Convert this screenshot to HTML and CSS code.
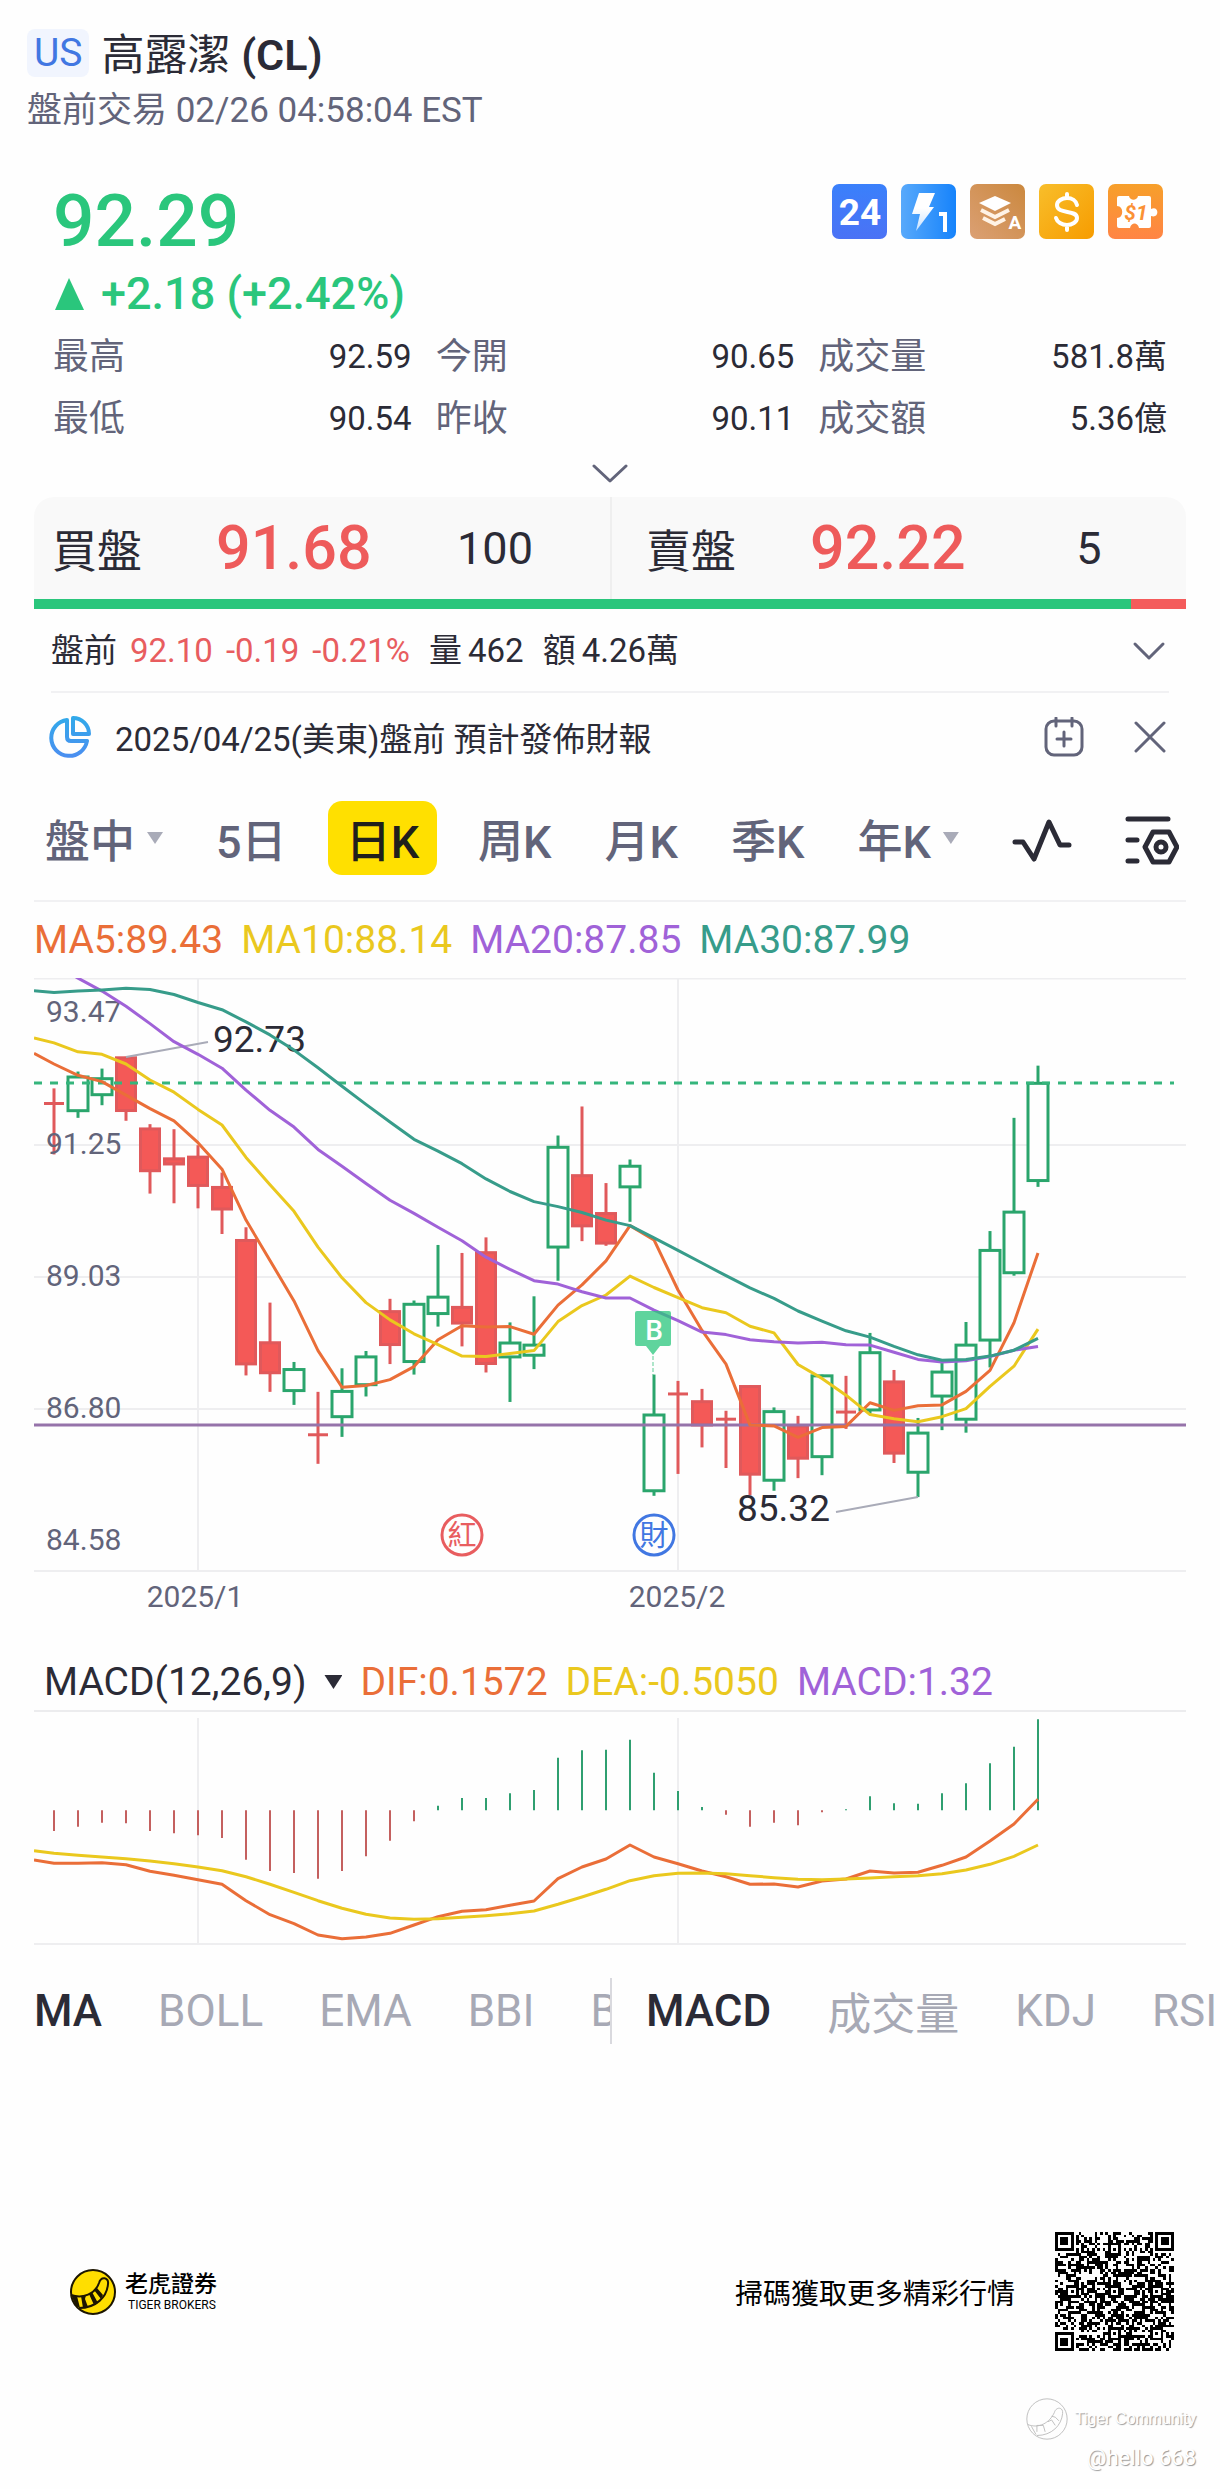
FILE: index.html
```html
<!DOCTYPE html>
<html lang="zh-Hant">
<head>
<meta charset="utf-8">
<meta name="viewport" content="width=device-width, initial-scale=1">
<title>高露潔 (CL)</title>
<link rel="stylesheet" href="styles.css">
</head>
<body>
<header class="head">
  <div class="head-row"><span class="market">US</span><h1 class="name">高露潔 <b>(CL)</b></h1></div>
  <p class="session">盤前交易 02/26 04:58:04 EST</p>
</header>

<main>
<section class="quote">
  <div class="quote-top">
    <div class="last">92.29</div>
    <div class="badges">
      <svg class="badge" viewBox="0 0 55 55"><defs><linearGradient id="b1" x1="0" y1="0" x2="0" y2="1"><stop offset="0" stop-color="#3a80fb"/><stop offset="1" stop-color="#4b72f5"/></linearGradient></defs><rect width="55" height="55" rx="7" fill="url(#b1)"/><text x="28" y="41" class="b-24">24</text></svg>
      <svg class="badge" viewBox="0 0 55 55"><defs><linearGradient id="b2" x1="0" y1="0" x2="1" y2="0"><stop offset="0" stop-color="#58a9fb"/><stop offset="1" stop-color="#1683fb"/></linearGradient><linearGradient id="bolt" x1="0" y1="0" x2="0" y2="1"><stop offset=".4" stop-color="#fff"/><stop offset="1" stop-color="#c4e0ff"/></linearGradient></defs><rect width="55" height="55" rx="7" fill="url(#b2)"/><path d="M18 9h16l-6 14h5L15 47l4-17h-8z" fill="url(#bolt)"/><path d="M38 30h6v18" fill="none" stroke="#fff" stroke-width="4"/></svg>
      <svg class="badge" viewBox="0 0 55 55"><defs><linearGradient id="b3" x1="0" y1="1" x2="1" y2="0"><stop offset="0" stop-color="#dba074"/><stop offset="1" stop-color="#cb883e"/></linearGradient></defs><rect width="55" height="55" rx="7" fill="url(#b3)"/><path d="M25 12l16 7-16 8-16-8z" fill="#fff"/><path d="M11 26l14 7 14-7M13 34l12 6 10-5" fill="none" stroke="#fff3e6" stroke-width="4"/><text x="45" y="45" class="b-a">A</text></svg>
      <svg class="badge" viewBox="0 0 55 55"><defs><linearGradient id="b4" x1="0" y1="0" x2="1" y2="1"><stop offset="0" stop-color="#f8be2b"/><stop offset="1" stop-color="#f79c00"/></linearGradient></defs><rect width="55" height="55" rx="7" fill="url(#b4)"/><path d="M38 21c-1-4-5-7-10-7s-10 3-10 7c0 10 20 4 20 13 0 4-5 7-10 7s-10-3-11-7M28 10v4M28 41v5" fill="none" stroke="#fff" stroke-width="4" stroke-linecap="round"/></svg>
      <svg class="badge" viewBox="0 0 55 55"><defs><linearGradient id="b5" x1="0" y1="0" x2="0" y2="1"><stop offset="0" stop-color="#f7a02a"/><stop offset="1" stop-color="#ff8445"/></linearGradient></defs><rect width="55" height="55" rx="7" fill="url(#b5)"/><path d="M11 12h10c1 5 8 5 9 0h11q2 0 2 2v11c8-4 9 10 0 7v10q0 2-2 2H31c-1-6-8-6-9 0H11q-2 0-2-2v-8c7 0 7-12 0-12v-8q0-2 2-2z" fill="#fff"/><text x="28" y="36" class="b-s1">$1</text></svg>
    </div>
  </div>
  <div class="change"><svg class="up" viewBox="0 0 29 32"><path d="M14 0L29 32H0z" fill="currentColor"/></svg>+2.18 (+2.42%)</div>
  <dl class="stats">
    <div><dt>最高</dt><dd>92.59</dd></div>
    <div><dt>今開</dt><dd>90.65</dd></div>
    <div><dt>成交量</dt><dd>581.8萬</dd></div>
    <div><dt>最低</dt><dd>90.54</dd></div>
    <div><dt>昨收</dt><dd>90.11</dd></div>
    <div><dt>成交額</dt><dd>5.36億</dd></div>
  </dl>
  <button class="more" aria-label="展開"><svg width="36" height="20" viewBox="0 0 36 20"><path d="M2 2l16 15L34 2" class="ico"/></svg></button>
</section>

<section class="book">
  <div class="sides">
    <div class="side"><span class="side-name">買盤</span><span class="side-price">91.68</span><span class="side-qty">100</span></div>
    <div class="side ask"><span class="side-name">賣盤</span><span class="side-price">92.22</span><span class="side-qty">5</span></div>
  </div>
  <div class="ratio"><i style="width:95.2%"></i></div>
</section>

<section class="pre">
  <span>盤前</span><span class="red">92.10</span><span class="red">-0.19</span><span class="red">-0.21%</span><span class="pair">量<b>462</b></span><span class="pair">額<b>4.26萬</b></span>
  <button class="plain end" aria-label="展開盤前"><svg width="34" height="20" viewBox="0 0 34 20"><path d="M3 3l14 14L31 3" class="ico"/></svg></button>
</section>

<section class="notice">
  <svg width="42" height="42" viewBox="0 0 42 42"><defs><linearGradient id="pie" x1="0" y1="0" x2="0" y2="1"><stop offset="0" stop-color="#32a9ea"/><stop offset="1" stop-color="#4a8ff0"/></linearGradient></defs><path d="M18 4A18 18 0 1 0 38 25H22q-4 0-4-4zM24 2a16 16 0 0 1 16 16H24z" fill="none" stroke="url(#pie)" stroke-width="4" stroke-linejoin="round"/></svg>
  <p>2025/04/25(美東)盤前 預計發佈財報</p>
  <button class="plain" aria-label="加入日曆"><svg width="40" height="40" viewBox="0 0 40 40"><rect x="2" y="4" width="36" height="34" rx="8" class="ico"/><path d="M12 1v8M28 1v8M20 15v14M13 22h14" class="ico"/></svg></button>
  <button class="plain" aria-label="關閉"><svg width="32" height="32" viewBox="0 0 32 32"><path d="M2 2l28 28M30 2L2 30" class="ico"/></svg></button>
</section>

<nav class="periods">
  <button>盤中<i class="caret"></i></button>
  <button>5日</button>
  <button class="on">日K</button>
  <button>周K</button>
  <button>月K</button>
  <button>季K</button>
  <button>年K<i class="caret"></i></button>
  <button aria-label="畫線"><svg width="60" height="44" viewBox="0 0 60 44"><path d="M3 24h8l11 17L37 4l11 23h9" class="ink"/></svg></button>
  <button aria-label="設定"><svg width="54" height="50" viewBox="0 0 54 50"><path d="M3 4h40M3 25h9M3 46h9M28 17h16l8 15-8 15H28l-8-15z" class="ink"/><circle cx="36" cy="32" r="5" class="ink"/></svg></button>
</nav>

<section class="chart">
  <p class="legend"><span class="c5">MA5:89.43</span><span class="c10">MA10:88.14</span><span class="c20">MA20:87.85</span><span class="c30">MA30:87.99</span></p>
  <svg id="kline" class="plot" viewBox="0 0 1152 640">
    <path class="grid" d="M0 .5H1152M0 167H1152M0 299H1152M0 431H1152M0 593H1152M164 0V593M644 0V593"/>
    <g id="candles"></g>
    <path class="lastline" d="M0 105H1140"/>
    <g class="axis"><text x="12" y="44">93.47</text><text x="12" y="176">91.25</text><text x="12" y="308">89.03</text><text x="12" y="440">86.80</text><text x="12" y="572">84.58</text></g>
    <text class="peak" x="179" y="74">92.73</text>
    <text class="peak" x="703" y="543">85.32</text>
    <path class="leader" d="M92 79l82-15M802 534l82-15"/>
    <path class="cost" d="M0 447H1152"/>
    <g id="averages"></g>
    <path d="M603 333h32q2 0 2 2v31q0 2-2 2h-9l-7 9-7-9h-9q-2 0-2-2v-31q0-2 2-2z" fill="#2ac67c" fill-opacity=".75"/>
    <path d="M619 378v19" stroke="#5fcd96" stroke-width="1" stroke-dasharray="4 2"/>
    <text class="buy" x="620" y="362">B</text>
    <g class="mark red"><circle cx="428" cy="557" r="20"/><text x="428" y="568">紅</text></g>
    <g class="mark blue"><circle cx="620" cy="557" r="20"/><text x="620" y="568">財</text></g>
    <g class="axis mid"><text x="161" y="629">2025/1</text><text x="643" y="629">2025/2</text></g>
  </svg>
</section>

<section class="macd">
  <p class="legend macd-legend"><button class="plain indicator">MACD(12,26,9)<i class="caret dark"></i></button><span class="c5">DIF:0.1572</span><span class="c10">DEA:-0.5050</span><span class="c20">MACD:1.32</span></p>
  <svg id="macd" class="plot" viewBox="0 0 1152 234">
    <path class="grid" d="M0 232H1152M164 6V232M644 6V232"/>
    <g id="bars"></g>
  </svg>
</section>

<div class="indicators">
  <nav class="strip"><button class="on">MA</button><button>BOLL</button><button>EMA</button><button>BBI</button><button>BIAS</button></nav>
  <nav class="strip sub"><button class="on">MACD</button><button>成交量</button><button>KDJ</button><button>RSI</button></nav>
</div>
</main>

<footer>
  <div class="promo">
    <svg width="48" height="48" viewBox="0 0 48 48"><circle cx="24" cy="24" r="22" fill="#ffde00" stroke="#1c1500" stroke-width="2"/><path d="M2 27c12 4 24-1 28-12 2-7 10-6 9 1-1 13-12 24-29 24" fill="#ffde00" stroke="#1c1500" stroke-width="2"/><path d="M2 27l6 1 3 12-4-2zM12 28l5-1-1 4 3 8-5 1zM20 26l3-2 6 11-4 2zM25 22l3-2 6 7-2 4z" fill="#1c1500"/></svg>
    <div class="brand"><strong>老虎證券</strong><small>TIGER BROKERS</small></div>
    <p class="scan">掃碼獲取更多精彩行情</p>
    <svg id="qr" width="119" height="119" viewBox="0 0 45 45" shape-rendering="crispEdges" role="img" aria-label="QR code"></svg>
  </div>
  <div class="stamp">
    <div class="stamp-row"><svg width="44" height="44" viewBox="0 0 48 48"><g fill="none" stroke="#bbb" stroke-width="1"><circle cx="24" cy="24" r="22"/><path d="M3 30c12 5 24-2 29-13 2-7 10-6 9 1-1 13-12 24-28 24M7 32l5 9M13 38v-7h7l2 7M25 27l4-2 4 6M29 21l4 1 4 4"/></g></svg><span>Tiger Community</span></div>
    <div class="user">@hello 668</div>
  </div>
</footer>
<script src="chart.js"></script>
</body>
</html>
```
FILE: styles.css
```css
* { box-sizing: border-box; margin: 0; padding: 0; }
body { background: #fefefe; color: #2b2b36; font-family: Roboto, "Noto Sans CJK TC", sans-serif; overflow-x: hidden; }
button { font: inherit; color: inherit; background: none; border: 0; display: flex; align-items: center; white-space: nowrap; cursor: pointer; }
svg { display: block; flex: none; }
i, b { font-style: normal; font-weight: inherit; }
.red { color: #e85d5f; }
.blue { color: #4177e2; }

.ico { fill: none; stroke: #62647a; stroke-width: 3; stroke-linecap: round; stroke-linejoin: round; }
.ink { fill: none; stroke: #2b2b36; stroke-width: 5; stroke-linecap: round; stroke-linejoin: round; }

.head { padding: 27px 27px 0; }
.head-row { display: flex; align-items: center; gap: 12px; height: 56px; }
.market { height: 48px; line-height: 48px; padding: 0 7px; margin-bottom: 4px; border-radius: 8px; background: #f1f5fe; color: #4177e2; font-size: 39px; }
.name { font-size: 43px; font-weight: 400; line-height: 56px; }
.name b { font-weight: 600; }
.session { font-size: 35px; line-height: 56px; color: #62647a; }

.quote { padding: 40px 53px 0; }
.quote-top { display: flex; justify-content: space-between; height: 84px; }
.last { font-size: 73px; font-weight: 500; line-height: 84px; color: #2ac67c; }
.badges { display: flex; gap: 14px; padding: 5px 4px 0 0; }
.badge { width: 55px; height: 55px; }
.badge text { fill: #fff; text-anchor: middle; font-weight: 700; }
.badge .b-24 { font-size: 37px; }
.badge .b-a { font-size: 19px; }
.badge .b-s1 { font-size: 21px; font-style: italic; fill: #fb9135; }
.change { display: flex; align-items: center; gap: 17px; padding-left: 2px; font-size: 45px; font-weight: 500; line-height: 62px; color: #2ac67c; }
.up { width: 29px; height: 32px; }
.stats { display: grid; grid-template-columns: 36fr 36fr 35fr; column-gap: 24px; padding-top: 1px; }
.stats div { display: flex; justify-content: space-between; line-height: 62px; }
.stats dt { font-size: 36px; color: #62647a; }
.stats dd { font-size: 33px; }
.more { width: 100%; height: 47px; justify-content: center; }

.book { margin: 0 34px; }
.sides { display: grid; grid-template-columns: 1fr 1fr; height: 102px; background: #f9f9f9; border-radius: 20px 20px 0 0; }
.side { display: flex; align-items: center; padding-left: 18px; }
.side.ask { padding-left: 34px; border-left: 2px solid #efefef; }
.side-name { width: 90px; font-size: 45px; }
.side-price { width: 155px; margin: 0 74px; font-size: 61px; font-weight: 500; color: #ee5b5b; }
.side-qty { width: 100px; text-align: center; font-size: 45px; }
.ratio { height: 10px; background: #f45b5b; }
.ratio i { display: block; height: 10px; background: #2ac67c; }

.pre { display: flex; align-items: center; gap: 13px; height: 84px; padding-top: 2px; margin: 0 51px; border-bottom: 2px solid #f1f1f3; font-size: 33px; line-height: 48px; }
.pair { display: flex; align-items: baseline; gap: 6px; margin-left: 6px; }
.plain.end { margin-left: auto; margin-right: 3px; }
.notice { display: flex; align-items: center; height: 88px; padding: 0 54px 0 49px; gap: 50px; font-size: 33px; }
.notice p { flex: 1; margin-left: -26px; }

.periods { display: flex; justify-content: space-between; height: 121px; padding: 20px 7px 25px 11px; margin: 0 34px; border-bottom: 2px solid #f1f1f3; font-size: 45px; font-weight: 500; color: #62647a; }
.periods svg { margin-top: 4px; }
.periods .on { margin: 0 -12px; padding: 0 18px; border-radius: 14px; background: #ffe000; color: #201f1c; }
.caret { width: 16px; height: 12px; margin-left: 12px; background: #a9abb8; clip-path: polygon(0 0, 100% 0, 50% 100%); }
.caret.dark { width: 18px; height: 14px; margin-left: 18px; background: #2b2b36; }

.chart, .macd { margin: 0 34px; }
.plot { width: 100%; height: auto; }
.legend { display: flex; align-items: center; gap: 18px; height: 76px; font-size: 39px; white-space: nowrap; }
.macd-legend { height: 58px; margin-top: 36px; padding-left: 10px; border-bottom: 2px solid #ececee; }
.c5 { color: #ea6e38; }
.c10 { color: #eac81e; }
.c20 { color: #a062d8; }
.c30 { color: #379c8a; }

.grid { fill: none; stroke: #eeeef0; stroke-width: 2; }
.axis { font-size: 30px; fill: #62647a; }
.mid { text-anchor: middle; }
.peak { font-size: 37px; fill: #2b2b36; }
.leader { fill: none; stroke: #a9abb8; stroke-width: 2; }
.lastline { stroke: #35b57c; stroke-width: 3; stroke-dasharray: 8 8; }
.cost { stroke: #9673aa; stroke-width: 3; }
.up-c { stroke: #2aa56c; stroke-width: 3; fill: #fefefe; }
.down-c { stroke: #e0595b; stroke-width: 3; fill: #f45957; }
.line { fill: none; stroke: currentColor; stroke-width: 3; stroke-linejoin: round; }
.buy { font-size: 28px; font-weight: 500; fill: #fff; text-anchor: middle; }
.mark circle { fill: none; stroke: currentColor; stroke-width: 3; }
.mark text { font-size: 29px; fill: currentColor; text-anchor: middle; }

.indicators { display: grid; grid-template-columns: 1fr 1fr; height: 66px; margin-top: 32px; }
.strip { display: flex; gap: 56px; padding-left: 34px; overflow: hidden; font-size: 44px; color: #a7a9b5; }
.strip.sub { border-left: 2px solid #d9d9de; }
.strip .on { color: #2b2b36; font-weight: 500; }

.promo { display: flex; align-items: center; margin-top: 188px; padding: 0 46px 0 69px; color: #000; }
.brand { display: flex; flex-direction: column; margin-left: 8px; }
.brand strong { font-size: 23px; font-weight: 500; line-height: 26px; }
.brand small { font-size: 12px; line-height: 14px; padding-left: 3px; }
.scan { margin: 0 40px 0 auto; font-size: 28px; }
.stamp { display: flex; flex-direction: column; align-items: flex-end; padding: 46px 24px 12px; color: #fff; text-shadow: 1px 1px 1px #999; }
.stamp-row { display: flex; align-items: center; gap: 6px; font: 16px/44px "Liberation Sans", sans-serif; }
.user { font-size: 22px; line-height: 34px; }
```
FILE: chart.js
```js
const NS = 'http://www.w3.org/2000/svg';
const add = (parent, tag, attrs) => {
  const el = document.createElementNS(NS, tag);
  for (const k in attrs) el.setAttribute(k, attrs[k]);
  return parent.appendChild(el);
};
const dayX = i => 20 + 24 * i;
const priceY = v => v * 0.4209 - 18;
const macdY = v => v / 3 - 71;

// One day each: direction, high, body top, body bottom, low (scale units, downwards)
const days = [
  ['d', 305, 341, 341, 462], ['u', 265, 278, 358, 375], ['u', 258, 282, 320, 345], ['d', 230, 230, 360, 382],
  ['d', 390, 399, 503, 555], ['d', 402, 470, 487, 578], ['d', 440, 466, 538, 590], ['d', 505, 538, 594, 651],
  ['d', 635, 664, 962, 987], ['d', 814, 907, 983, 1026], ['u', 955, 973, 1023, 1057], ['d', 1026, 1128, 1128, 1197],
  ['u', 970, 1025, 1085, 1133], ['u', 929, 943, 1009, 1037], ['d', 805, 833, 916, 960], ['u', 809, 818, 954, 985],
  ['u', 677, 801, 840, 871], ['d', 696, 823, 865, 918], ['d', 659, 693, 961, 980], ['u', 861, 910, 943, 1050],
  ['u', 799, 915, 939, 972], ['u', 417, 445, 682, 762], ['d', 348, 510, 634, 668], ['d', 530, 600, 675, 679],
  ['u', 474, 490, 539, 622], ['u', 985, 1081, 1261, 1273], ['d', 1000, 1031, 1031, 1221], ['d', 1019, 1047, 1107, 1158],
  ['d', 1071, 1091, 1091, 1207], ['d', 1011, 1011, 1224, 1272], ['u', 1063, 1073, 1236, 1261], ['d', 1083, 1105, 1186, 1231],
  ['u', 985, 988, 1180, 1224], ['d', 988, 1074, 1074, 1114], ['u', 886, 933, 1069, 1078], ['d', 974, 1000, 1174, 1195],
  ['u', 1088, 1124, 1217, 1276], ['u', 955, 979, 1036, 1117], ['u', 860, 915, 1091, 1123], ['u', 644, 690, 903, 968],
  ['u', 375, 599, 743, 750], ['u', 251, 293, 524, 539]
];
const candles = document.getElementById('candles');
days.forEach(([dir, high, top, bottom, low], i) => {
  const x = dayX(i), cls = dir === 'u' ? 'up-c' : 'down-c';
  add(candles, 'path', { class: cls, d: `M${x} ${priceY(high)}V${priceY(low)}` });
  if (top === bottom) add(candles, 'path', { class: cls, d: `M${x - 10} ${priceY(top)}h20` });
  else {
    const pad = dir === 'u' ? 0 : 1;
    add(candles, 'rect', { class: cls, x: x - 10 + pad / 2, width: 20 - pad, y: priceY(top) + pad, height: priceY(bottom) - priceY(top) - 2 * pad });
  }
});

// The first value of each line is at the left edge of the plot
const lines = {
  c5: [222, 247, 274, 289, 321, 353, 382, 434, 497, 618, 714, 810, 928, 1015, 1011, 997, 966, 902, 869, 872, 871, 889, 820, 772, 715, 631, 665, 784, 880, 960, 1105, 1107, 1134, 1111, 1108, 1052, 1070, 1059, 1057, 1025, 975, 862, 696],
  c10: [185, 197, 218, 224, 247, 285, 314, 355, 392, 469, 534, 597, 682, 755, 814, 855, 888, 914, 941, 942, 935, 928, 859, 821, 796, 751, 778, 802, 826, 838, 870, 886, 961, 994, 1034, 1080, 1090, 1097, 1085, 1066, 1013, 965, 877],
  c20: [-20, 10, 43, 74, 110, 151, 194, 224, 257, 309, 357, 397, 450, 490, 531, 571, 602, 635, 667, 706, 735, 762, 770, 788, 803, 803, 832, 857, 884, 890, 902, 907, 910, 908, 914, 915, 932, 949, 955, 952, 942, 927, 918],
  c30: [73, 77, 74, 71, 67, 70, 82, 101, 118, 147, 178, 214, 256, 300, 343, 385, 426, 454, 484, 520, 550, 574, 586, 600, 618, 631, 660, 690, 720, 750, 779, 804, 834, 858, 881, 896, 918, 938, 951, 949, 941, 927, 899]
};
const draw = (parent, cls, values, toY) => add(parent, 'polyline', {
  class: 'line ' + cls,
  points: values.map((v, i) => (i ? dayX(i - 1) : 0) + ',' + toY(v).toFixed(1)).join(' ')
});
for (const cls in lines) draw(document.getElementById('averages'), cls, lines[cls], priceY);

const histogram = [570, 557, 545, 547, 570, 577, 583, 591, 656, 690, 696, 713, 690, 646, 599, 541, 494, 471, 471, 457, 447, 350, 328, 326, 296, 395, 450, 498, 521, 557, 545, 553, 514, 505, 466, 487, 488, 457, 427, 367, 317, 235];
const bars = document.getElementById('bars');
histogram.forEach((v, i) => add(bars, 'path', {
  d: `M${dayX(i)} ${macdY(508)}V${macdY(v)}`, 'stroke-width': 2, stroke: v < 508 ? '#2f9f70' : '#c4605f'
}));
draw(bars, 'c5', [657, 667, 667, 665, 671, 691, 703, 716, 730, 779, 821, 848, 882, 893, 888, 877, 852, 827, 811, 806, 793, 780, 713, 678, 654, 612, 648, 668, 690, 707, 730, 729, 738, 720, 714, 690, 696, 694, 673, 648, 600, 549, 475], macdY);
draw(bars, 'c10', [629, 637, 643, 648, 653, 660, 668, 678, 689, 707, 730, 754, 779, 802, 820, 831, 835, 833, 829, 824, 818, 810, 790, 768, 745, 719, 704, 697, 696, 698, 704, 710, 715, 716, 714, 711, 707, 704, 698, 687, 670, 646, 612], macdY);

// QR symbol, 45 modules a side
const size = 45, finders = [[3, 3], [41, 3], [3, 41]];
const aligns = [[22, 6], [6, 22], [22, 22], [38, 22], [22, 38], [38, 38]];
let seed = 668, path = '';
const dark = (x, y) => {
  seed = (seed * 1103515245 + 12345) % 2147483648;
  for (const [cx, cy] of finders) {
    const r = Math.max(Math.abs(x - cx), Math.abs(y - cy));
    if (r <= 4) return r === 3 || r < 2;
  }
  for (const [cx, cy] of aligns) {
    const r = Math.max(Math.abs(x - cx), Math.abs(y - cy));
    if (r <= 2) return r !== 1;
  }
  if (x === 6 || y === 6) return (x + y) % 2 === 0;
  return seed / 2147483648 < 0.52;
};
for (let y = 0; y < size; y++) for (let x = 0; x < size; x++) if (dark(x, y)) path += `M${x} ${y}h1v1h-1z`;
add(document.getElementById('qr'), 'path', { d: path });
```
